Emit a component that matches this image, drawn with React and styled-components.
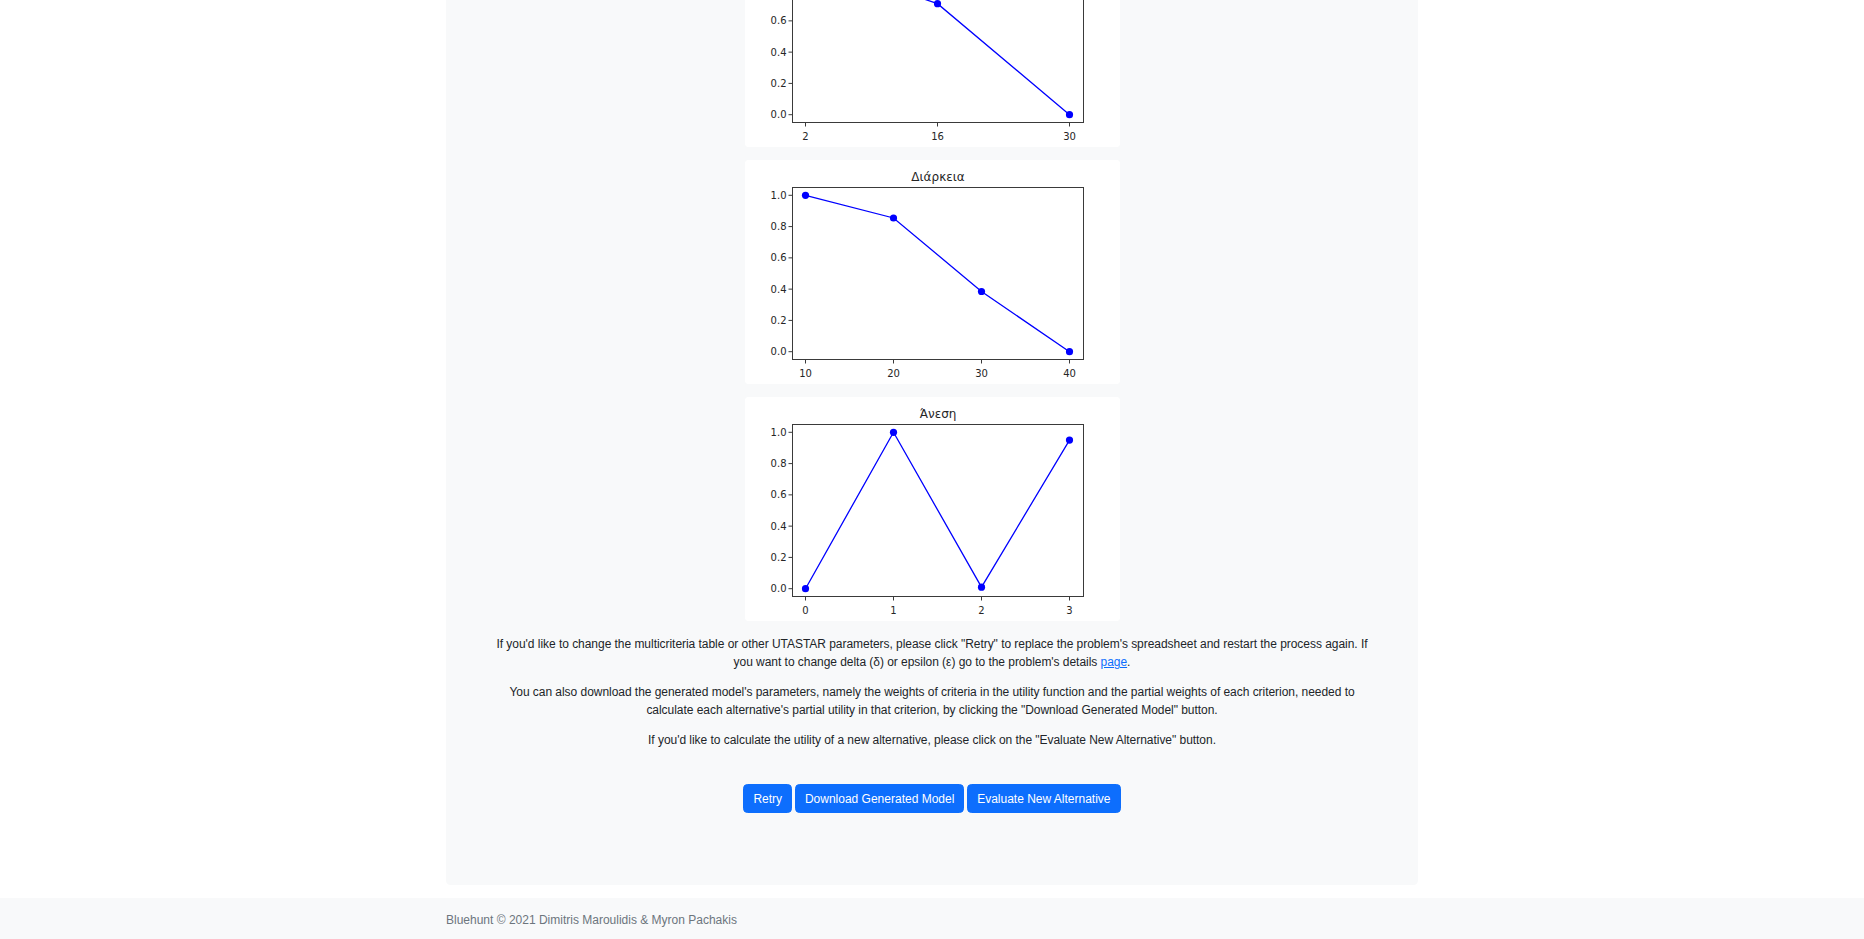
import React from "react";
import styled, { createGlobalStyle } from "styled-components";

const Global = createGlobalStyle`
  html, body { margin: 0; padding: 0; background: #ffffff; }
  body {
    font-family: "Liberation Sans", Arial, sans-serif;
    font-size: 12px;
    line-height: 1.5;
    color: #212529;
  }
  * { box-sizing: border-box; }
`;

const Page = styled.div`
  display: flex;
  flex-direction: column;
  min-height: 939px;
`;

const Main = styled.main`
  width: 972px;
  margin: 0 auto;
  background: #f8f9fa;
  border-radius: 0 0 4.5px 4.5px;
  padding-bottom: 71.5px;
  display: flex;
  flex-direction: column;
  align-items: center;
`;

const Charts = styled.div`
  display: flex;
  flex-direction: column;
  gap: 13px;
`;

const ChartCard = styled.div`
  width: 375px;
  background: #ffffff;
  border-radius: ${(p) => (p.$cropped ? "0 0 4px 4px" : "4px")};
  overflow: hidden;
  svg { display: block; }
`;

const Copy = styled.div`
  width: 882px;
  margin-top: 14px;
  text-align: center;
  letter-spacing: -0.04px;
`;

const Para = styled.p`
  margin: 0 0 12px;
`;

const Link = styled.a`
  color: #0d6efd;
  text-decoration: underline;
`;

const Actions = styled.div`
  display: flex;
  gap: 2.8px;
  margin-top: 23px;
`;

const Button = styled.button`
  font-family: "Liberation Sans", Arial, sans-serif;
  font-size: 12px;
  line-height: 18px;
  font-weight: 400;
  color: #ffffff;
  background: #0d6efd;
  border: 0.75px solid #0d6efd;
  border-radius: 4.5px;
  padding: 4.5px 9px;
  cursor: pointer;
`;

const Footer = styled.footer`
  margin-top: 13px;
  background: #f8f9fa;
  padding: 13px 0 11px;
`;

const FooterInner = styled.div`
  width: 972px;
  margin: 0 auto;
  color: #6c757d;
  font-size: 12px;
  line-height: 18px;
`;

const AX = { l: 47.5, r: 338.5, t: 27.5, b: 199.5 };
const YTICKS = [0, 0.2, 0.4, 0.6, 0.8, 1.0];

function Chart({ title, xTicks, points, crop = 0 }) {
  const W = 375;
  const H = 224;
  const x0 = xTicks[0];
  const x1 = xTicks[xTicks.length - 1];
  const px = (x) => 60.5 + ((x - x0) / (x1 - x0)) * 264;
  const py = (v) => 191.7 - v * 156.4;
  const poly = points.map(([x, v]) => `${px(x)},${py(v)}`).join(" ");
  const shownY = YTICKS.filter((v) => py(v) - 5 > crop);
  return (
    <ChartCard $cropped={crop > 0}>
      <svg width={W} height={H - crop} viewBox={`0 ${crop} ${W} ${H - crop}`}>
        <rect x="0" y="0" width={W} height={H} fill="#ffffff" />
        {title && crop === 0 && (
          <text
            x={(AX.l + AX.r) / 2}
            y="20.5"
            textAnchor="middle"
            fontFamily="DejaVu Sans, sans-serif"
            fontSize="12"
            fill="#262626"
          >
            {title}
          </text>
        )}
        <rect
          x={AX.l}
          y={AX.t}
          width={AX.r - AX.l}
          height={AX.b - AX.t}
          fill="none"
          stroke="#3a3a3a"
          strokeWidth="1"
        />
        {shownY.map((v) => (
          <g key={v}>
            <line x1={AX.l - 4} x2={AX.l} y1={py(v)} y2={py(v)} stroke="#3a3a3a" strokeWidth="1" />
            <text
              x={AX.l - 6}
              y={py(v) + 3.6}
              textAnchor="end"
              fontFamily="DejaVu Sans, sans-serif"
              fontSize="10"
              fill="#262626"
            >
              {v.toFixed(1)}
            </text>
          </g>
        ))}
        {xTicks.map((x) => (
          <g key={x}>
            <line x1={px(x)} x2={px(x)} y1={AX.b} y2={AX.b + 4} stroke="#3a3a3a" strokeWidth="1" />
            <text
              x={px(x)}
              y={AX.b + 17}
              textAnchor="middle"
              fontFamily="DejaVu Sans, sans-serif"
              fontSize="10"
              fill="#262626"
            >
              {x}
            </text>
          </g>
        ))}
        <polyline points={poly} fill="none" stroke="#0000ff" strokeWidth="1.3" />
        {points.map(([x, v]) => (
          <circle key={x} cx={px(x)} cy={py(v)} r="3.6" fill="#0000ff" />
        ))}
      </svg>
    </ChartCard>
  );
}

export default function App() {
  return (
    <>
      <Global />
      <Page>
        <Main>
          <Charts>
            <Chart
              crop={77}
              xTicks={[2, 16, 30]}
              points={[
                [2, 1.0],
                [16, 0.71],
                [30, 0.0],
              ]}
            />
            <Chart
              title="Διάρκεια"
              xTicks={[10, 20, 30, 40]}
              points={[
                [10, 1.0],
                [20, 0.855],
                [30, 0.385],
                [40, 0.0],
              ]}
            />
            <Chart
              title="Άνεση"
              xTicks={[0, 1, 2, 3]}
              points={[
                [0, 0.0],
                [1, 1.0],
                [2, 0.01],
                [3, 0.95],
              ]}
            />
          </Charts>
          <Copy>
            <Para>
              If you'd like to change the multicriteria table or other UTASTAR parameters, please click
              "Retry" to replace the problem's spreadsheet and restart the process again. If you want to
              change delta (δ) or epsilon (ε) go to the problem's details <Link href="#">page</Link>.
            </Para>
            <Para>
              You can also download the generated model's parameters, namely the weights of criteria in the
              utility function and the partial weights of each criterion, needed to calculate each
              alternative's partial utility in that criterion, by clicking the "Download Generated Model"
              button.
            </Para>
            <Para>
              If you'd like to calculate the utility of a new alternative, please click on the "Evaluate New
              Alternative" button.
            </Para>
          </Copy>
          <Actions>
            <Button>Retry</Button>
            <Button>Download Generated Model</Button>
            <Button>Evaluate New Alternative</Button>
          </Actions>
        </Main>
        <Footer>
          <FooterInner>Bluehunt © 2021 Dimitris Maroulidis &amp; Myron Pachakis</FooterInner>
        </Footer>
      </Page>
    </>
  );
}
